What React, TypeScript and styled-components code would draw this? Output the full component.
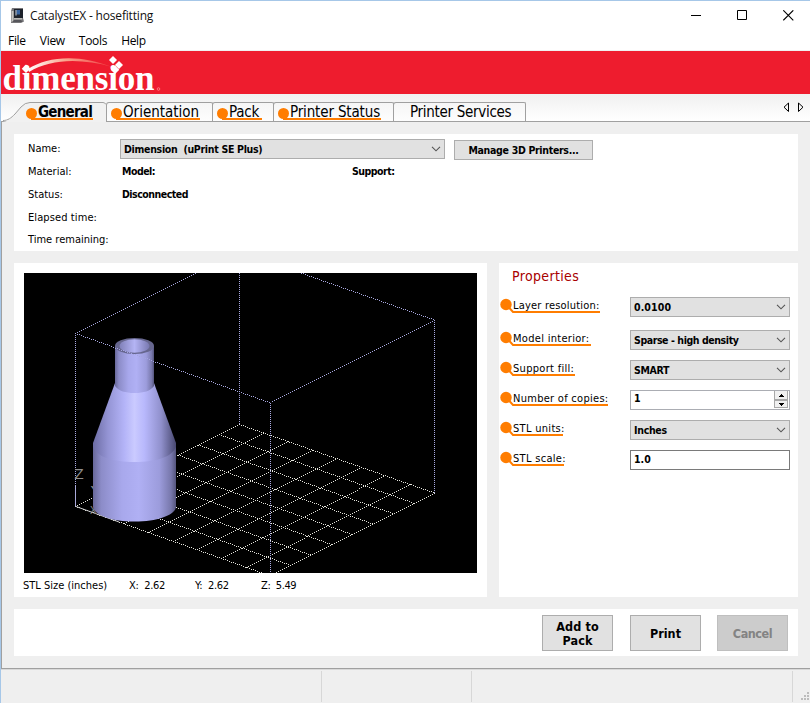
import React from 'react';
import styled, { createGlobalStyle, css } from 'styled-components';

const GlobalStyle = createGlobalStyle`
  *, *::before, *::after { box-sizing: border-box; }
  html, body { margin: 0; padding: 0; }
  body { font-family: 'DejaVu Sans Condensed', 'DejaVu Sans', sans-serif; font-size: 11px; color: #000; }
  button { font: inherit; color: inherit; padding: 0; margin: 0; border-radius: 0; }
`;

const ORANGE = '#ff7d00';

/* ---------- window frame ---------- */

const Window = styled.div`
  width: 810px;
  height: 703px;
  display: flex;
  flex-direction: column;
  overflow: hidden;
  background: #efefef;
  border-top: 1px solid #a6c7e8;
  border-left: 1px solid #a6c7e8;
`;

const TitleBar = styled.header`
  height: 30px;
  flex: none;
  display: flex;
  align-items: center;
  padding-left: 9px;
  background: #fff;
`;

const Title = styled.h1`
  margin: 0 auto 0 5px;
  font: 12px/16px 'Open Sans', 'Noto Sans', sans-serif;
  letter-spacing: -0.18px;
  color: #111;
`;

const WindowButtons = styled.div`
  display: flex;
  gap: 35px;
  padding: 0 16px 1px 0;
`;

const WindowButton = styled.button`
  width: 11px;
  height: 11px;
  border: 0;
  background: none;
  display: flex;
`;

const MenuBar = styled.nav`
  height: 20px;
  flex: none;
  display: flex;
  gap: 14px;
  padding-left: 7px;
  background: #fff;
  border-bottom: 1px solid #f0f0f0;
`;

const MenuItem = styled.span`
  font: 12px/19px 'Open Sans', 'Noto Sans', sans-serif;
  letter-spacing: -0.3px;
`;

const Banner = styled.div`
  height: 43px;
  flex: none;
  background: #ee1c2e;
  svg { display: block; overflow: visible; }
`;

/* ---------- tabs ---------- */

const TabStrip = styled.div`
  height: 28px;
  flex: none;
  display: flex;
  align-items: flex-end;
  padding-left: 2px;
  background: linear-gradient(#f0f0f0, #fff);
  border-bottom: 1px solid #a0a0a0;
`;

const ActiveTab = styled.div`
  width: 103px;
  height: 20px;
  flex: none;
  display: grid;
  margin-bottom: -1px;
  > * { grid-area: 1 / 1; }
`;

const ActiveLabel = styled.div`
  z-index: 1;
  padding: 1px 0 0 35px;
`;

const Tab = styled.div<{ $width: number; $inset: number }>`
  width: ${(p) => p.$width}px;
  height: 19px;
  flex: none;
  padding-left: ${(p) => p.$inset}px;
  background: linear-gradient(#f6f6f6, #fdfdfd);
  border: 1px solid #a0a0a0;
  border-bottom: 0;
  border-radius: 3px 2px 0 0;
  & + & { margin-left: -1px; }
`;

const TabText = styled.span<{ $width: number; $tracking?: number; $bold?: boolean; $marked?: boolean }>`
  position: relative;
  display: block;
  width: ${(p) => p.$width}px;
  height: 17px;
  font-size: 15px;
  line-height: 19px;
  white-space: nowrap;
  font-weight: ${(p) => (p.$bold ? 700 : 400)};
  letter-spacing: ${(p) => p.$tracking ?? 0}px;
  ${(p) => p.$marked && css`
    &::before {
      content: '';
      position: absolute;
      left: -12px;
      top: 5px;
      width: 11px;
      height: 11px;
      border-radius: 50%;
      background: ${ORANGE};
    }
    &::after {
      content: '';
      position: absolute;
      left: -7px;
      right: -1px;
      bottom: 0;
      height: 2px;
      background: ${ORANGE};
    }
  `}
`;

const TabArrows = styled.div`
  margin-left: auto;
  align-self: flex-start;
  padding: 8px 6px 0 0;
`;

/* ---------- content ---------- */

const Content = styled.main`
  height: 547px;
  flex: none;
  display: grid;
  grid-template-columns: 473px 299px;
  grid-template-rows: 117px 334px 47px;
  gap: 12px;
  padding: 12px 0 0 12px;
  border-left: 1px solid #a0a0a0;
  border-bottom: 1px solid #a0a0a0;
`;

const Panel = styled.section<{ $wide?: boolean }>`
  background: #fff;
  ${(p) => p.$wide && 'grid-column: 1 / -1;'}
`;

const PrinterGrid = styled.div`
  display: grid;
  grid-template-columns: 92px 230px 95px auto;
  grid-template-rows: 23px 23px 23px 22px 22px;
  justify-content: start;
  padding-left: 14px;
`;

const FieldLabel = styled.span<{ $tracking?: number }>`
  grid-column: 1;
  line-height: 13px;
  padding-top: 8px;
  white-space: nowrap;
  letter-spacing: ${(p) => p.$tracking ?? 0}px;
`;

const FieldValue = styled.span`
  padding: 8px 0 0 2px;
  font-size: 10.5px;
  font-weight: 700;
  line-height: 13px;
  letter-spacing: -0.5px;
`;

const PrinterPicker = styled.div`
  grid-column: 2 / -1;
  display: flex;
  gap: 9px;
  padding-top: 5px;
`;

const Select = styled.div<{ $width: number; $tracking?: number }>`
  width: ${(p) => p.$width}px;
  height: 20px;
  flex: none;
  display: flex;
  align-items: center;
  justify-content: space-between;
  padding: 0 3px;
  background: #e1e1e1;
  border: 1px solid #adadad;
  font-size: 10.5px;
  font-weight: 700;
  line-height: 18px;
  letter-spacing: ${(p) => p.$tracking ?? -0.3}px;
  white-space: pre;
`;

const SmallButton = styled.button`
  width: 139px;
  height: 20px;
  flex: none;
  margin-top: 1px;
  background: #e1e1e1;
  border: 1px solid #adadad;
  font-size: 10.5px;
  font-weight: 700;
  letter-spacing: -0.31px;
`;

/* ---------- viewer ---------- */

const ViewerPanel = styled(Panel)`
  padding: 10px 10px 0;
`;

const Scene = styled.svg`
  display: block;
  background: #000;
`;

const SizeRow = styled.div`
  display: flex;
  margin-left: -1px;
  line-height: 13px;
  padding-top: 6px;
  white-space: pre;
`;

const SizeCell = styled.span<{ $width: number; $tracking?: number }>`
  width: ${(p) => p.$width}px;
  letter-spacing: ${(p) => p.$tracking ?? -0.3}px;
`;

/* ---------- properties ---------- */

const PropertiesPanel = styled(Panel)`
  padding: 3px 0 0 13px;
`;

const Heading = styled.h2`
  margin: 0 0 12px;
  height: 19px;
  font-size: 14px;
  font-weight: 400;
  line-height: 20px;
  letter-spacing: 0.35px;
  color: #a80000;
`;

const PropertyRow = styled.div<{ $gap?: number }>`
  display: grid;
  grid-template-columns: 118px 160px;
  height: 30px;
  align-items: start;
  margin-bottom: ${(p) => p.$gap ?? 0}px;
`;

const Callout = styled.span<{ $width: number; $tracking?: number }>`
  position: relative;
  display: block;
  width: ${(p) => p.$width}px;
  height: 16px;
  margin: 2px 0 0 1px;
  line-height: 13px;
  white-space: nowrap;
  letter-spacing: ${(p) => p.$tracking ?? 0.3}px;
  &::after {
    content: '';
    position: absolute;
    left: 0;
    right: -1px;
    top: 12px;
    height: 2px;
    background: ${ORANGE};
  }
`;

const CalloutPin = styled.svg`
  position: absolute;
  left: -13px;
  top: -1px;
`;

const TextField = styled.div<{ $dark?: boolean }>`
  width: 160px;
  height: 20px;
  display: flex;
  justify-content: space-between;
  padding-left: 3px;
  background: #fff;
  border: 1px solid ${(p) => (p.$dark ? '#7a7a7a' : '#abadb3')};
  font-size: 10.5px;
  font-weight: 700;
  line-height: ${(p) => (p.$dark ? 17 : 15)}px;
`;

/* ---------- actions and status ---------- */

const Actions = styled(Panel)`
  display: flex;
  justify-content: flex-end;
  padding: 6px 10px 0 0;
`;

const ActionButton = styled.button<{ $off?: boolean; $tracking?: number }>`
  width: 71px;
  height: 36px;
  margin-left: ${(p) => (p.$off ? 16 : 17)}px;
  padding: 1px 8px 0;
  background: ${(p) => (p.$off ? '#cccccc' : '#e1e1e1')};
  border: 1px solid ${(p) => (p.$off ? '#bfbfbf' : '#adadad')};
  color: ${(p) => (p.$off ? '#838383' : '#000')};
  font-size: 12.5px;
  font-weight: 700;
  line-height: 14px;
  letter-spacing: ${(p) => p.$tracking ?? 0}px;
`;

const StatusBar = styled.footer`
  flex: 1;
  display: grid;
  grid-template-columns: 321px 150px 321px 1fr;
  border-top: 1px solid #d9d9d9;
  padding-top: 1px;
`;

const StatusCell = styled.div`
  height: 31px;
  border-right: 1px solid #d7d7d7;
`;

const Grip = styled.svg`
  align-self: end;
  justify-self: end;
  margin-bottom: 2px;
`;

/* ---------- drawings ---------- */

const Chevron = () => (
  <svg width="10" height="6" viewBox="0 0 10 6">
    <path d="M1 .8l4 4 4-4" fill="none" stroke="#555" strokeWidth="1.1" />
  </svg>
);

const AppIcon = () => (
  <svg width="15" height="16" viewBox="0 0 15 16">
    <path d="M2 0h11v10l1 3.500-3 1.500H1V3z" fill="#77777a" />
    <path d="M4 1h9v9H4z" fill="#1d222b" />
    <path d="M6.500 2h3.500v4.500H6.500z" fill="#35629e" />
    <path d="M5.500 2h1v5.500h-1z" fill="#cfd8e2" />
    <path d="M1.500 3h2v11h-2z" fill="#c5c5c1" />
    <path d="M4 10h8v1.500H4z" fill="#b9b9b5" />
    <path d="M4 12h7l1.500 2H2z" fill="#55555a" />
  </svg>
);

const Logo = () => (
  <svg width="170" height="43" viewBox="1 51 170 43">
    <defs>
      <linearGradient id="swoosh">
        <stop offset="0" stopColor="#fff" />
        <stop offset=".45" stopColor="#f9a58c" />
        <stop offset="1" stopColor="#f03a40" />
      </linearGradient>
    </defs>
    <path d="M28 69C48 56 80 54 112 67 80 58 51 59 29 72z" fill="url(#swoosh)" />
    <text x="2.5" y="90" textLength="152" fontFamily="'Liberation Serif', serif" fontWeight="700" fontSize="35" fill="#fff">
      dimension
    </text>
    <path d="M26 64.500l4.300 4.300-4.300 4.300-4.300-4.300zM113 56l4 4-4 4-4-4zM119 61l4 4-4 4-4-4zM115 65.500l4.300 4.300-4.300 4.300-4.300-4.300z" fill="#fff" />
    <circle cx="158.500" cy="89" r="1.300" fill="none" stroke="#f88" strokeWidth=".8" />
  </svg>
);

type Pt = [number, number];

/* One-pixel dots on every other pixel, as a stippled line is rasterised. */
function stipple([x1, y1]: Pt, [x2, y2]: Pt): string {
  const steps = Math.max(Math.abs(x2 - x1), Math.abs(y2 - y1));
  let d = '';
  for (let i = 0; i <= steps; i += 2) {
    const x = Math.floor(x1 + ((x2 - x1) * i) / steps);
    const y = Math.floor(y1 + ((y2 - y1) * i) / steps);
    d += `M${x} ${y}h1v1h-1z`;
  }
  return d;
}

const mix = (a: Pt, b: Pt, t: number): Pt => [a[0] + (b[0] - a[0]) * t, a[1] + (b[1] - a[1]) * t];

const LEFT: Pt = [51.5, 233.5];
const BACK: Pt = [215.5, 151.5];
const RIGHT: Pt = [410.5, 220];
const FRONT: Pt = [246.5, 303];
const TOP_LEFT: Pt = [51.5, 60.5];
const TOP_BACK: Pt = [215.5, -21.5];
const TOP_RIGHT: Pt = [410.5, 47];
const TOP_FRONT: Pt = [246.5, 130];

const floorGrid = Array.from({ length: 9 }, (_, i) => i / 8)
  .map((t) => stipple(mix(LEFT, BACK, t), mix(FRONT, RIGHT, t)) + stipple(mix(LEFT, FRONT, t), mix(BACK, RIGHT, t)))
  .join('');

const box = [
  stipple(TOP_LEFT, TOP_BACK),
  stipple(TOP_BACK, TOP_RIGHT),
  stipple(TOP_LEFT, TOP_FRONT),
  stipple(TOP_RIGHT, TOP_FRONT),
  stipple(TOP_LEFT, LEFT),
  stipple([215.5, 0], BACK),
  stipple(TOP_RIGHT, RIGHT),
  stipple(TOP_FRONT, FRONT),
].join('');

const Model = () => (
  <Scene width="453" height="300" viewBox="0 0 453 300">
    <defs>
      <linearGradient id="tube">
        <stop offset="0" stopColor="#68689a" />
        <stop offset=".1" stopColor="#8c8cc8" />
        <stop offset=".35" stopColor="#a8a8ec" />
        <stop offset=".55" stopColor="#b0b0f4" />
        <stop offset=".8" stopColor="#9c9cdc" />
        <stop offset=".94" stopColor="#7878ac" />
        <stop offset="1" stopColor="#54547c" />
      </linearGradient>
      <linearGradient id="cone">
        <stop offset="0" stopColor="#6c6ca4" />
        <stop offset=".18" stopColor="#9494d4" />
        <stop offset=".38" stopColor="#b4b4f8" />
        <stop offset=".5" stopColor="#cacaff" />
        <stop offset=".62" stopColor="#b8b8fc" />
        <stop offset=".82" stopColor="#9090cc" />
        <stop offset="1" stopColor="#484870" />
      </linearGradient>
      <linearGradient id="bore">
        <stop offset="0" stopColor="#8080b8" />
        <stop offset=".5" stopColor="#b4b4f4" />
        <stop offset="1" stopColor="#7878b0" />
      </linearGradient>
    </defs>
    <path d={floorGrid} fill="#e4e4dc" shapeRendering="crispEdges" />
    <path d={box} fill="#a8a8e0" shapeRendering="crispEdges" />
    <path d="M51.500 212v21.500" stroke="#a8a8d8" />
    <path d="M52 233.500l43 15.500" stroke="#c8c8c8" />
    <g fill="#8e8e8e" fontFamily="'Liberation Sans', sans-serif" fontSize="15">
      <text x="50.500" y="206">Z</text>
      <text x="66.500" y="223">Y</text>
      <text x="66" y="241" fontSize="10">X</text>
    </g>
    <path d="M69 172v62c1 8 18 14.500 41.500 14.500S151 242 152 234v-62z" fill="url(#tube)" />
    <path d="M91 110L69 170v4c4 10 20 15 41.500 15S148 184 152 174v-4L130 110z" fill="url(#cone)" />
    <path d="M91 73v40c4 5 10 7 19.500 7S126 118 130 113V73z" fill="url(#tube)" />
    <ellipse cx="110.500" cy="73" rx="19.500" ry="8" fill="#66668e" />
    <ellipse cx="110.500" cy="73" rx="15" ry="6.800" fill="url(#bore)" />
    <path d={stipple([91, 75], [129, 88])} fill="#a4a4e0" shapeRendering="crispEdges" />
  </Scene>
);

const Pin = () => (
  <CalloutPin width="16" height="16" viewBox="0 0 16 16">
    <circle cx="6" cy="6.500" r="5.700" fill={ORANGE} />
    <path d="M8 8.500l5 5.500H16" fill="none" stroke={ORANGE} strokeWidth="2" />
  </CalloutPin>
);

const Spinner = () => (
  <svg width="15" height="18" viewBox="0 0 15 18" shapeRendering="crispEdges">
    <path d="M1 0h13v8H1zM1 10h13v7H1z" fill="#f0f0f0" />
    <path d="M.5 0v8.500h13V0M.5 9.500h13v7H.5z" fill="none" stroke="#a8a8a8" />
    <path d="M7 3h1v1h1v1h1v1H5V5h1V4h1zM5 12h5v1H9v1H8v1H7v-1H6v-1H5z" fill="#000" />
  </svg>
);

export default function App() {
  return (
    <>
      <GlobalStyle />
      <Window>
        <TitleBar>
          <AppIcon />
          <Title>CatalystEX - hosefitting</Title>
          <WindowButtons>
            <WindowButton aria-label="Minimize">
              <svg width="11" height="11"><path d="M0 5.500h10" stroke="#000" /></svg>
            </WindowButton>
            <WindowButton aria-label="Maximize">
              <svg width="11" height="11"><path d="M.5.500h9v9h-9z" fill="none" stroke="#000" /></svg>
            </WindowButton>
            <WindowButton aria-label="Close">
              <svg width="11" height="11"><path d="M.3.300l10 10M10.300.300l-10 10" stroke="#000" strokeWidth="1.100" /></svg>
            </WindowButton>
          </WindowButtons>
        </TitleBar>
        <MenuBar>
          <MenuItem>File</MenuItem>
          <MenuItem>View</MenuItem>
          <MenuItem>Tools</MenuItem>
          <MenuItem>Help</MenuItem>
        </MenuBar>
        <Banner><Logo /></Banner>
        <TabStrip>
          <ActiveTab>
            <svg width="103" height="20" viewBox="0 0 103 20">
              <path d="M0 20C6 19 8 16 12 12l6-7q4-4.500 9-4.500h73q2 0 3 2V20z" fill="#f1f1f1" />
              <path d="M-1 18.500h1C5 18.500 8 16 12 12l6-7q4-4.500 9-4.500h73q2 0 3 2" fill="none" stroke="#a0a0a0" />
            </svg>
            <ActiveLabel>
              <TabText $width={54} $tracking={-0.77} $bold $marked>General</TabText>
            </ActiveLabel>
          </ActiveTab>
          <Tab $width={107} $inset={16}><TabText $width={76} $marked>Orientation</TabText></Tab>
          <Tab $width={62} $inset={16}><TabText $width={32} $tracking={-0.2} $marked>Pack</TabText></Tab>
          <Tab $width={121} $inset={16}><TabText $width={90} $tracking={-0.15} $marked>Printer Status</TabText></Tab>
          <Tab $width={133} $inset={16}><TabText $width={101} $tracking={-0.3}>Printer Services</TabText></Tab>
          <TabArrows>
            <svg width="21" height="11" viewBox="0 0 21 11" fill="none" stroke="#000">
              <path d="M5.500 1v8.500L1 5.200zM15.500 1v8.500L20 5.200z" />
            </svg>
          </TabArrows>
        </TabStrip>
        <Content>
          <Panel $wide>
            <PrinterGrid>
              <FieldLabel>Name:</FieldLabel>
              <PrinterPicker>
                <Select $width={325}>Dimension  (uPrint SE Plus)<Chevron /></Select>
                <SmallButton>Manage 3D Printers...</SmallButton>
              </PrinterPicker>
              <FieldLabel>Material:</FieldLabel>
              <FieldValue>Model:</FieldValue>
              <FieldValue>Support:</FieldValue>
              <FieldLabel>Status:</FieldLabel>
              <FieldValue>Disconnected</FieldValue>
              <FieldLabel $tracking={0.1}>Elapsed time:</FieldLabel>
              <FieldLabel>Time remaining:</FieldLabel>
            </PrinterGrid>
          </Panel>
          <ViewerPanel>
            <Model />
            <SizeRow>
              <SizeCell $width={106} $tracking={0}>STL Size (inches)</SizeCell>
              <SizeCell $width={66}>X:  2.62</SizeCell>
              <SizeCell $width={66}>Y:  2.62</SizeCell>
              <SizeCell $width={60} $tracking={-0.4}>Z:  5.49</SizeCell>
            </SizeRow>
          </ViewerPanel>
          <PropertiesPanel>
            <Heading>Properties</Heading>
            <PropertyRow $gap={3}>
              <Callout $width={86} $tracking={0.2}><Pin />Layer resolution:</Callout>
              <Select $width={160} $tracking={0.1}>0.0100<Chevron /></Select>
            </PropertyRow>
            <PropertyRow>
              <Callout $width={77}><Pin />Model interior:</Callout>
              <Select $width={160} $tracking={-0.42}>Sparse - high density<Chevron /></Select>
            </PropertyRow>
            <PropertyRow>
              <Callout $width={61}><Pin />Support fill:</Callout>
              <Select $width={160}>SMART<Chevron /></Select>
            </PropertyRow>
            <PropertyRow>
              <Callout $width={94} $tracking={0.28}><Pin />Number of copies:</Callout>
              <TextField>1<Spinner /></TextField>
            </PropertyRow>
            <PropertyRow>
              <Callout $width={49}><Pin />STL units:</Callout>
              <Select $width={160}>Inches<Chevron /></Select>
            </PropertyRow>
            <PropertyRow>
              <Callout $width={50}><Pin />STL scale:</Callout>
              <TextField $dark>1.0</TextField>
            </PropertyRow>
          </PropertiesPanel>
          <Actions $wide>
            <ActionButton $tracking={0.15}>Add to Pack</ActionButton>
            <ActionButton>Print</ActionButton>
            <ActionButton $off $tracking={-0.45}>Cancel</ActionButton>
          </Actions>
        </Content>
        <StatusBar>
          <StatusCell />
          <StatusCell />
          <StatusCell />
          <Grip width="9" height="9" viewBox="0 0 9 9">
            <path d="M6 0h2v2H6zM3 3h2v2H3zM6 3h2v2H6zM0 6h2v2H0zM3 6h2v2H3zM6 6h2v2H6z" fill="#bcbcbc" />
          </Grip>
        </StatusBar>
      </Window>
    </>
  );
}
